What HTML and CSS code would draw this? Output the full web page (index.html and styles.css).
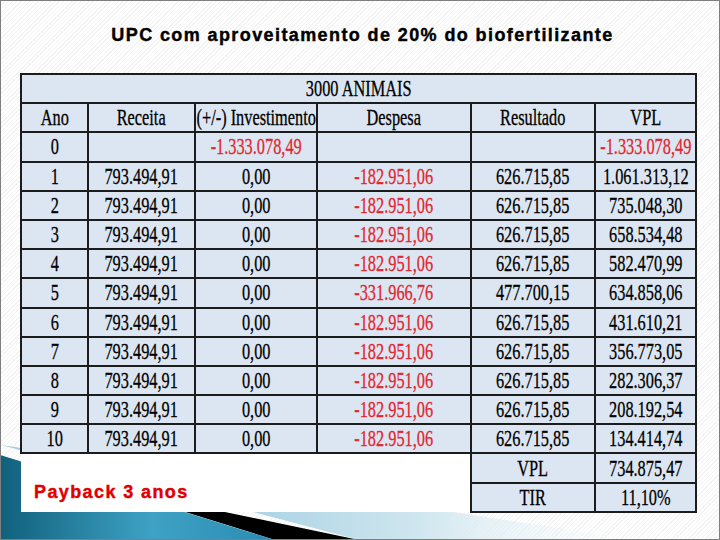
FILE: index.html
```html
<!DOCTYPE html>
<html lang="pt">
<head>
    <meta charset="UTF-8">
    <meta name="viewport" content="width=device-width, initial-scale=1.0">
    <title>UPC com aproveitamento de 20% do biofertilizante</title>
    <link rel="stylesheet" href="styles.css">
</head>
<body>

<div class="slide">

    <!-- bottom decoration -->
    <svg class="deco" width="718" height="538" viewBox="0 0 718 538">
        <defs>
            <linearGradient id="teal" x1="0" y1="0" x2="1" y2="0">
                <stop offset="0" stop-color="#10607b"/>
                <stop offset="0.55" stop-color="#3ea2c5"/>
                <stop offset="1" stop-color="#2a8cb0"/>
            </linearGradient>
            <linearGradient id="pale" x1="0" y1="0" x2="1" y2="0">
                <stop offset="0.3" stop-color="#9fcde0"/>
                <stop offset="0.65" stop-color="#cfe6ef"/>
                <stop offset="1" stop-color="#f4f9fb" stop-opacity="0"/>
            </linearGradient>
        </defs>
        <polygon points="0,444 640,539 358,539" fill="url(#pale)"/>
        <polygon points="104,486 358,539 274,539" fill="#000"/>
        <polygon points="-1,454 274,539 -1,539" fill="url(#teal)"/>
    </svg>

    <h1 class="title">UPC com aproveitamento de 20% do biofertilizante</h1>

    <table class="grid">
        <colgroup>
            <col style="width:67px">
            <col style="width:107px">
            <col style="width:122px">
            <col style="width:154px">
            <col style="width:124px">
            <col style="width:101px">
        </colgroup>
        <tr><td colspan="6"><div class="c">3000 ANIMAIS</div></td></tr>
        <tr>
            <td><div class="c">Ano</div></td>
            <td><div class="c">Receita</div></td>
            <td><div class="c">(+/-) Investimento</div></td>
            <td><div class="c">Despesa</div></td>
            <td><div class="c">Resultado</div></td>
            <td><div class="c">VPL</div></td>
        </tr>
        <tr>
            <td><div class="c">0</div></td>
            <td></td>
            <td class="neg"><div class="c">-1.333.078,49</div></td>
            <td></td>
            <td></td>
            <td class="neg"><div class="c">-1.333.078,49</div></td>
        </tr>
        <tr>
            <td><div class="c">1</div></td>
            <td><div class="c">793.494,91</div></td>
            <td><div class="c">0,00</div></td>
            <td class="neg"><div class="c">-182.951,06</div></td>
            <td><div class="c">626.715,85</div></td>
            <td><div class="c">1.061.313,12</div></td>
        </tr>
        <tr>
            <td><div class="c">2</div></td>
            <td><div class="c">793.494,91</div></td>
            <td><div class="c">0,00</div></td>
            <td class="neg"><div class="c">-182.951,06</div></td>
            <td><div class="c">626.715,85</div></td>
            <td><div class="c">735.048,30</div></td>
        </tr>
        <tr>
            <td><div class="c">3</div></td>
            <td><div class="c">793.494,91</div></td>
            <td><div class="c">0,00</div></td>
            <td class="neg"><div class="c">-182.951,06</div></td>
            <td><div class="c">626.715,85</div></td>
            <td><div class="c">658.534,48</div></td>
        </tr>
        <tr>
            <td><div class="c">4</div></td>
            <td><div class="c">793.494,91</div></td>
            <td><div class="c">0,00</div></td>
            <td class="neg"><div class="c">-182.951,06</div></td>
            <td><div class="c">626.715,85</div></td>
            <td><div class="c">582.470,99</div></td>
        </tr>
        <tr>
            <td><div class="c">5</div></td>
            <td><div class="c">793.494,91</div></td>
            <td><div class="c">0,00</div></td>
            <td class="neg"><div class="c">-331.966,76</div></td>
            <td><div class="c">477.700,15</div></td>
            <td><div class="c">634.858,06</div></td>
        </tr>
        <tr>
            <td><div class="c">6</div></td>
            <td><div class="c">793.494,91</div></td>
            <td><div class="c">0,00</div></td>
            <td class="neg"><div class="c">-182.951,06</div></td>
            <td><div class="c">626.715,85</div></td>
            <td><div class="c">431.610,21</div></td>
        </tr>
        <tr>
            <td><div class="c">7</div></td>
            <td><div class="c">793.494,91</div></td>
            <td><div class="c">0,00</div></td>
            <td class="neg"><div class="c">-182.951,06</div></td>
            <td><div class="c">626.715,85</div></td>
            <td><div class="c">356.773,05</div></td>
        </tr>
        <tr>
            <td><div class="c">8</div></td>
            <td><div class="c">793.494,91</div></td>
            <td><div class="c">0,00</div></td>
            <td class="neg"><div class="c">-182.951,06</div></td>
            <td><div class="c">626.715,85</div></td>
            <td><div class="c">282.306,37</div></td>
        </tr>
        <tr>
            <td><div class="c">9</div></td>
            <td><div class="c">793.494,91</div></td>
            <td><div class="c">0,00</div></td>
            <td class="neg"><div class="c">-182.951,06</div></td>
            <td><div class="c">626.715,85</div></td>
            <td><div class="c">208.192,54</div></td>
        </tr>
        <tr>
            <td><div class="c">10</div></td>
            <td><div class="c">793.494,91</div></td>
            <td><div class="c">0,00</div></td>
            <td class="neg"><div class="c">-182.951,06</div></td>
            <td><div class="c">626.715,85</div></td>
            <td><div class="c">134.414,74</div></td>
        </tr>
        <tr>
            <td class="payback" colspan="4" rowspan="2">Payback 3 anos</td>
            <td><div class="c">VPL</div></td>
            <td><div class="c">734.875,47</div></td>
        </tr>
        <tr>
            <td><div class="c">TIR</div></td>
            <td><div class="c">11,10%</div></td>
        </tr>
    </table>

</div>

</body>
</html>
```

FILE: styles.css
```css
body {
    margin: 0;
    background: #fff;
}
.slide {
    position: relative;
    width: 718px;
    height: 538px;
    border: 1px solid #7f7f7f;
    overflow: hidden;
    background: repeating-linear-gradient(135deg, #fff 0 2px, #f3f3f3 2px 3px);
}
.deco {
    position: absolute;
    left: 0;
    top: 0;
}
.title {
    position: relative;
    margin: 0;
    padding: 24px 0 0 5px;
    text-align: center;
    font-family: "Liberation Sans", Arial, sans-serif;
    font-size: 18px;
    line-height: 20px;
    font-weight: bold;
    letter-spacing: 1.4px;
    color: #000;
    -webkit-text-stroke: 0.4px #000;
}
.grid {
    position: relative;
    z-index: 1;
    margin: 28px 0 0 19px;
    border-collapse: collapse;
    table-layout: fixed;
    width: 675px;
    font-family: "Liberation Serif", "Times New Roman", serif;
    font-size: 24px;
    color: #000;
}
.grid tr {
    height: 29.2px;
}
.grid td {
    padding: 0;
    border: 2px solid #1c1c1c;
    background: #dce6f2;
    overflow: visible;
}
.grid .c {
    width: 147%;
    margin-left: -23.5%;
    text-align: center;
    white-space: nowrap;
    line-height: 25px;
    transform: scaleX(0.68);
    -webkit-text-stroke: 0.3px currentColor;
}
.grid .neg {
    color: #e1262f;
}
.grid .payback {
    border: none;
    background: #fff;
    vertical-align: bottom;
    padding: 0 0 10px 13px;
    font-family: "Liberation Sans", Arial, sans-serif;
    font-size: 18px;
    line-height: 20px;
    font-weight: bold;
    letter-spacing: 1.4px;
    color: #e00000;
    -webkit-text-stroke: 0.4px #e00000;
}
```
